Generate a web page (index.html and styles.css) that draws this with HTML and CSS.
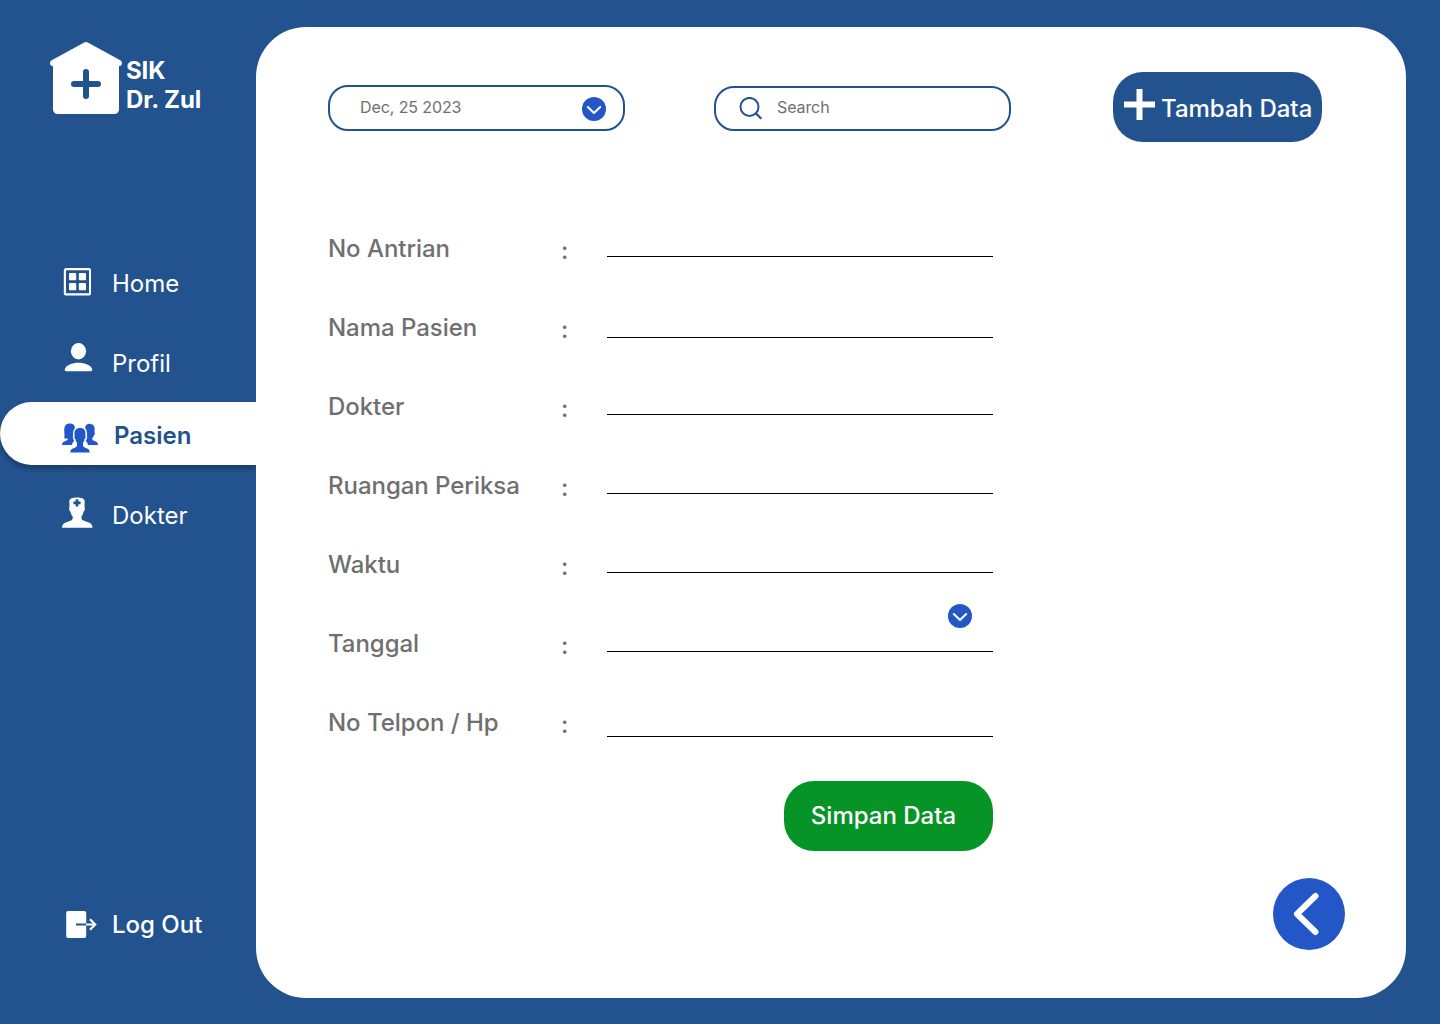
FILE: index.html
```html
<!DOCTYPE html>
<html lang="id">
<head>
<meta charset="utf-8">
<title>SIK Dr. Zul - Pasien</title>
<link rel="stylesheet" href="styles.css">
</head>
<body>
<aside class="sidebar">
  <div class="brand">
    <svg class="brand-logo" width="72" height="72" viewBox="0 0 72 72">
      <path fill="#fff" d="M33.8.7Q36-.6 38.200 .7L70.300 18.300Q72 19.300 72 21.200Q71.800 24 69 24V67Q69 72 64 72H8Q3 72 3 67V24Q.2 24 0 21.200Q0 19.300 1.700 18.300Z"/>
      <path d="M36 30V54M24 42H48" stroke="#22538e" stroke-width="6" stroke-linecap="round"/>
    </svg>
    <div class="brand-name">SIK<br>Dr. Zul</div>
  </div>
  <nav class="menu">
    <a class="item home">
      <svg class="icon" width="28" height="28" viewBox="0 0 28 28">
        <rect x="1.900" y="1.200" width="25.200" height="25.200" rx="1.500" fill="none" stroke="#fff" stroke-width="2.200"/>
        <g fill="#fff"><rect x="6" y="5" width="7.200" height="7.200" rx=".8"/><rect x="15.800" y="5" width="7.200" height="7.200" rx=".8"/><rect x="6" y="15" width="7.200" height="7.200" rx=".8"/><rect x="15.800" y="15" width="7.200" height="7.200" rx=".8"/></g>
      </svg>
      <span class="text">Home</span>
    </a>
    <a class="item profil">
      <svg class="icon" width="29" height="29" viewBox="0 0 29 29">
        <ellipse cx="14.500" cy="8.200" rx="7.600" ry="8.200" fill="#fff"/>
        <path fill="#fff" d="M2.500 28.200Q.2 28.200 .9 25.800C2.500 22.300 8 19.800 14.500 19.800S26.500 22.300 28 25.800Q28.800 28.200 26.500 28.200Z"/>
      </svg>
      <span class="text">Profil</span>
    </a>
    <a class="item pasien">
      <svg class="icon" width="36" height="30" viewBox="0 0 36 30">
        <g fill="#2356c7">
          <path d="M0 22C0 19.500 1.500 18.700 3.500 18C5.200 17.400 5.800 17 5.800 15.600C4.500 15.800 3 15.600 2.200 14.900C2.900 13 2.200 10 2.200 7C2.300 2.500 4.500 .8 6.500 .8C7.500 .2 12.200 .1 13 4.500L12 8V16.600C12.600 18.500 10.500 19 10 22Z"/>
          <path d="M36 22C36 19.500 34.500 18.700 32.500 18C30.800 17.400 30.200 17 30.200 15.200C31.500 14 31.700 13.500 31.900 12.300C33.300 11.500 33.200 10 32.500 9.500C33.100 4 32 1.800 29.500 1.300C28.500 .2 23.800 .2 23 4.500L24 8V16.600C23.400 18.500 25.500 19 26 22Z"/>
          <path stroke="#fff" stroke-width="3" stroke-linejoin="round" paint-order="stroke" d="M8.300 29.500C8.300 26.500 9.500 25.800 12 24.900C14 24.200 15 23.600 15 22.500V19.800C13.900 18.800 13.700 17.500 13.500 16.300C12.300 15.700 12 13.600 12.700 12.800C11.800 7.500 13.800 5 18 5S24.200 7.500 23.300 12.800C24 13.600 23.700 15.700 22.500 16.300C22.300 17.500 22.100 18.800 21 19.800V22.500C21 23.600 22 24.200 24 24.900C26.500 25.800 27.700 26.500 27.700 29.500Z"/>
        </g>
      </svg>
      <span class="text">Pasien</span>
    </a>
    <a class="item dokter">
      <svg class="icon" width="31" height="31" viewBox="0 0 31 31">
        <path fill="#fff" d="M0 30.800C0 27.500 1.500 26.300 4.500 25.200C8.500 23.800 10.700 23.300 10.700 21.300V19.500C9.500 18.200 8.800 16.500 8.500 14.700C7 13.500 6.700 11.500 7.500 10.300L7.300 4.300C7.500 1.500 11 .5 15 .5S22.500 1.500 22.700 4.300L22.500 10.300C23.300 11.500 23 13.500 21.500 14.700C21.200 16.500 20.500 18.200 19.500 19.500V21.300C19.500 23.300 22 23.800 26 25.200C29 26.300 30.500 27.500 30.500 30.800Z"/>
        <path d="M15 2.200V9.400M11.400 5.800H18.600" stroke="#22538e" stroke-width="2.700"/>
      </svg>
      <span class="text">Dokter</span>
    </a>
  </nav>
  <a class="item logout">
    <svg class="icon" width="31" height="27" viewBox="0 0 31 27">
      <path fill="#fff" d="M2 0H18.200Q20.200 0 20.200 2V25Q20.200 27 18.200 27H2Q.2 27 .2 25V2Q.2 0 2 0Z"/>
      <path d="M10 13.500H20.200" stroke="#22538e" stroke-width="2"/>
      <path d="M20.200 13.500H29M24 8.300L29.200 13.500L24 18.700" fill="none" stroke="#fff" stroke-width="2.200"/>
    </svg>
    <span class="text">Log Out</span>
  </a>
</aside>
<main class="panel">
  <header class="toolbar">
    <div class="field date">
      <span class="value">Dec, 25 2023</span>
      <svg width="24" height="24" viewBox="0 0 24 24"><circle cx="12" cy="12" r="12" fill="#2356c7"/><path d="M5.800 10L12 16L18.200 10" fill="none" stroke="#fff" stroke-width="2" stroke-linecap="round" stroke-linejoin="round"/></svg>
    </div>
    <div class="field search">
      <svg width="24" height="24" viewBox="0 0 24 24"><path d="M16.500 16L22.300 21.800" stroke="#22538e" stroke-width="2.200"/><circle cx="10.500" cy="9.900" r="9" fill="none" stroke="#22538e" stroke-width="2"/></svg>
      <span class="value">Search</span>
    </div>
    <button class="button add">
      <svg width="31" height="31" viewBox="0 0 31 31"><path d="M15.500 0V31M0 15.500H31" stroke="#fff" stroke-width="6"/></svg>
      <span>Tambah Data</span>
    </button>
  </header>
  <form class="form">
    <div class="row"><label>No Antrian</label><span class="colon">:</span><div class="line"></div></div>
    <div class="row"><label>Nama Pasien</label><span class="colon">:</span><div class="line low"></div></div>
    <div class="row"><label>Dokter</label><span class="colon">:</span><div class="line"></div></div>
    <div class="row"><label>Ruangan Periksa</label><span class="colon">:</span><div class="line"></div></div>
    <div class="row"><label>Waktu</label><span class="colon">:</span><div class="line"></div></div>
    <div class="row"><label>Tanggal</label><span class="colon">:</span><div class="line picker">
      <svg width="24" height="24" viewBox="0 0 24 24"><circle cx="12" cy="12" r="12" fill="#2356c7"/><path d="M5.800 10L12 16L18.200 10" fill="none" stroke="#fff" stroke-width="2" stroke-linecap="round" stroke-linejoin="round"/></svg>
    </div></div>
    <div class="row"><label>No Telpon / Hp</label><span class="colon">:</span><div class="line lowest"></div></div>
    <button type="button" class="button save">Simpan Data</button>
  </form>
  <a class="back">
    <svg width="72" height="72" viewBox="0 0 72 72"><circle cx="36" cy="36" r="36" fill="#2356c7"/><path d="M42.500 18L24 36L42.500 54" fill="none" stroke="#fff" stroke-width="6" stroke-linecap="round" stroke-linejoin="round"/></svg>
  </a>
</main>
</body>
</html>
```
FILE: styles.css
```css
* {
  box-sizing: border-box;
}

body {
  margin: 0;
  width: 1440px;
  height: 1024px;
  display: flex;
  overflow: hidden;
  background: #22538e;
  color: #fff;
  font-family: Inter, sans-serif;
  font-size: 24px;
  line-height: 29px;
}

svg {
  display: block;
  flex: none;
}

.sidebar {
  width: 256px;
  height: 1024px;
  padding-top: 42px;
  display: flex;
  flex-direction: column;
}

.brand {
  display: flex;
  gap: 4px;
  height: 72px;
  padding-left: 50px;
}

.brand-name {
  margin-top: 14px;
  font-weight: 700;
  letter-spacing: -0.12px;
  white-space: nowrap;
}

.menu {
  margin-top: 124px;
}

.item {
  display: flex;
  align-items: flex-start;
  padding-left: 62px;
}

.item .text {
  padding-top: var(--text-top);
  margin-left: auto;
  width: 144px;
  white-space: nowrap;
}

.home,
.profil,
.dokter {
  font-weight: 400;
}

.home {
  --text-top: 31px;
  height: 80px;
}

.home .icon {
  margin: 30px 0 0 1px;
}

.profil {
  --text-top: 31px;
  height: 84px;
}

.profil .icon {
  margin: 25px 0 0 2px;
}

.pasien {
  --text-top: 19px;
  height: 63px;
  border-radius: 32px 0 0 32px;
  background: #fff;
  color: #22538e;
  font-weight: 600;
  box-shadow: 0 4px 4px rgba(0, 0, 0, 0.25);
}

.pasien .icon {
  margin-top: 21px;
}

.pasien .text {
  width: 142px;
}

.dokter {
  --text-top: 36px;
}

.dokter .icon {
  margin-top: 32px;
}

.logout {
  --text-top: 0px;
  margin-top: auto;
  margin-bottom: 85px;
  padding-left: 66px;
  font-weight: 500;
}

.logout .icon {
  margin-top: 1px;
}

.panel {
  z-index: 1;
  width: 1150px;
  height: 971px;
  margin-top: 27px;
  padding: 45px 61px 48px 72px;
  display: flex;
  flex-direction: column;
  border-radius: 50px;
  background: #fff;
  color: #6f6f6f;
}

.toolbar {
  display: flex;
  height: 70px;
}

.field {
  display: flex;
  width: 297px;
  border: 2px solid #22538e;
  border-radius: 20px;
  font-size: 16px;
  line-height: 19px;
  font-weight: 400;
  letter-spacing: -0.1px;
}

.date {
  height: 46px;
  margin-top: 13px;
  padding: 10px 17px 0 30px;
  justify-content: space-between;
}

.search {
  height: 45px;
  margin: 14px 0 0 89px;
  padding: 9px 0 0 23px;
  gap: 14px;
}

.value {
  padding-top: 1px;
}

.button {
  width: 209px;
  height: 70px;
  padding: 0;
  border: 0;
  border-radius: 30px;
  color: #fff;
  font: 500 24px/29px Inter, sans-serif;
}

.add {
  display: flex;
  gap: 6px;
  margin-left: 102px;
  padding: 17px 0 0 11px;
  background: #22538e;
  white-space: nowrap;
}

.add span {
  padding-top: 5px;
}

.form {
  width: 665px;
  margin-top: 92px;
}

.row {
  display: grid;
  grid-template-columns: 233px 46px 386px;
  align-items: start;
  height: 79px;
  font-weight: 500;
  letter-spacing: -0.04px;
}

.colon {
  padding-top: 2px;
}

.line {
  height: 23px;
  border-bottom: 1px solid #000;
}

.low {
  height: 25px;
}

.lowest {
  height: 29px;
}

.picker {
  height: 48px;
  margin-top: -25px;
  padding-right: 21px;
  display: flex;
  justify-content: flex-end;
}

.save {
  display: block;
  margin: -6px 0 0 auto;
  padding: 0 10px 2px 0;
  background: #069426;
}

.back {
  align-self: flex-end;
  margin-top: auto;
}
```
